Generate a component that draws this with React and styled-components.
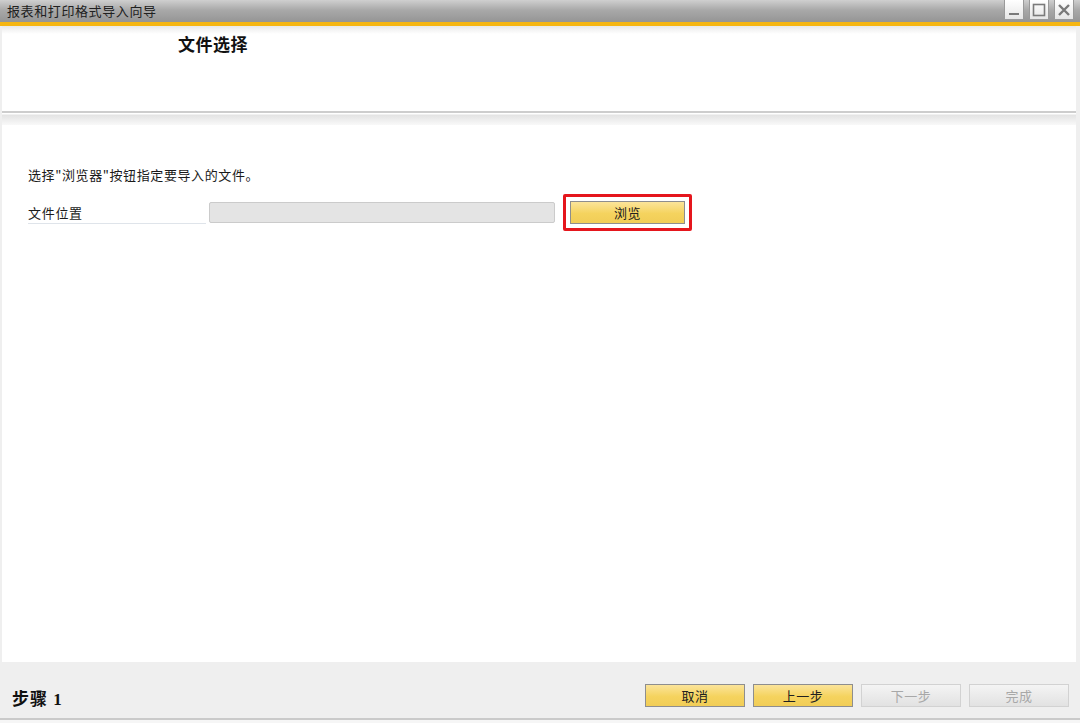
import React from 'react';
import styled, { createGlobalStyle } from 'styled-components';

const GlobalStyle = createGlobalStyle`
    html, body {
        margin: 0;
        padding: 0;
        background: #ffffff;
    }
    body {
        font-family: "Noto Sans CJK SC", "Liberation Sans", sans-serif;
        font-size: 13px;
        color: #1a1a1a;
    }
`;

function WindowButton({ kind }) {
    return (
        <WinBtn>
            <svg width="14" height="14" viewBox="0 0 14 14">
                {kind === 'min' && <rect x="2" y="10" width="10" height="2" fill="#7a7a7a" />}
                {kind === 'max' && (
                    <rect x="1.5" y="1.5" width="11" height="11" fill="none" stroke="#7a7a7a" strokeWidth="1.6" />
                )}
                {kind === 'close' && (
                    <path d="M2 2 L12 12 M12 2 L2 12" stroke="#7a7a7a" strokeWidth="2.4" />
                )}
            </svg>
        </WinBtn>
    );
}

function App() {
    return (
        <Window>
            <GlobalStyle />
            <TitleBar>
                <TitleText>报表和打印格式导入向导</TitleText>
                <WinButtons>
                    <WindowButton kind="min" />
                    <WindowButton kind="max" />
                    <WindowButton kind="close" />
                </WinButtons>
            </TitleBar>
            <AccentLine />
            <Frame>
                <Panel>
                    <Header>
                        <StepTitle>文件选择</StepTitle>
                    </Header>
                    <Divider />
                    <Content>
                        <Hint>选择"浏览器"按钮指定要导入的文件。</Hint>
                        <FieldRow>
                            <FieldLabel>文件位置</FieldLabel>
                            <PathInput />
                            <Highlight>
                                <Button $width={115}>浏览</Button>
                            </Highlight>
                        </FieldRow>
                    </Content>
                </Panel>
                <Footer>
                    <StepLabel>步骤 1</StepLabel>
                    <ButtonRow>
                        <Button $width={100}>取消</Button>
                        <Button $width={100}>上一步</Button>
                        <Button $width={100} $disabled>下一步</Button>
                        <Button $width={100} $disabled>完成</Button>
                    </ButtonRow>
                </Footer>
            </Frame>
            <BottomEdge />
        </Window>
    );
}

const Window = styled.div`
    width: 1080px;
    height: 723px;
    display: flex;
    flex-direction: column;
    overflow: hidden;
`;

const TitleBar = styled.div`
    height: 22px;
    flex: none;
    display: flex;
    align-items: center;
    justify-content: space-between;
    background: linear-gradient(#cfcfcf, #a9a9a9 45%, #959595);
    padding-left: 7px;
`;

const TitleText = styled.span`
    font-size: 13px;
    letter-spacing: 0.6px;
    color: #202020;
    line-height: 22px;
`;

const WinButtons = styled.div`
    display: flex;
    align-self: flex-start;
    gap: 5px;
    padding-right: 6px;
`;

const WinBtn = styled.div`
    width: 20px;
    height: 20px;
    display: flex;
    align-items: center;
    justify-content: center;
    background: linear-gradient(#ffffff, #e6e6e6);
    border: 1px solid #9a9a9a;
    border-top: none;
    box-sizing: border-box;
`;

const AccentLine = styled.div`
    height: 4px;
    flex: none;
    background: #f6b612;
`;

const Frame = styled.div`
    flex: 1;
    display: flex;
    flex-direction: column;
    background: #efefef;
    min-height: 0;
`;

const Panel = styled.div`
    flex: 1;
    display: flex;
    flex-direction: column;
    margin: 0 4px 0 2px;
    background: #ffffff;
    min-height: 0;
`;

const Header = styled.div`
    height: 85px;
    flex: none;
    background: linear-gradient(#e9e9e9, #ffffff 8px);
    padding: 8px 0 0 176px;
    box-sizing: border-box;
`;

const StepTitle = styled.div`
    font-size: 17px;
    letter-spacing: 0.5px;
    font-weight: 700;
    color: #111111;
    line-height: 20px;
`;

const Divider = styled.div`
    height: 14px;
    flex: none;
    border-top: 2px solid #cdcdcd;
    background: linear-gradient(#ffffff 0, #ffffff 1px, #e3e3e3 2px, #fbfbfb 13px);
    box-sizing: border-box;
`;

const Content = styled.div`
    flex: 1;
    padding: 40px 0 0 26px;
    display: flex;
    flex-direction: column;
    gap: 9px;
`;

const Hint = styled.div`
    font-size: 13px;
    letter-spacing: 0.6px;
    line-height: 20px;
`;

const FieldRow = styled.div`
    display: flex;
    align-items: center;
`;

const FieldLabel = styled.div`
    width: 178px;
    margin-right: 3px;
    font-size: 13px;
    letter-spacing: 0.7px;
    line-height: 20px;
    border-bottom: 1px solid #dfe4ea;
    padding-top: 1px;
`;

const PathInput = styled.div`
    width: 346px;
    height: 21px;
    box-sizing: border-box;
    background: #e4e4e4;
    border: 1px solid #cbcbcb;
    border-radius: 2px;
`;

const Highlight = styled.div`
    margin-left: 8px;
    padding: 4px;
    border: 3px solid #e5161d;
    border-radius: 2px;
    display: flex;
`;

const Button = styled.div`
    width: ${(p) => p.$width}px;
    height: 23px;
    box-sizing: border-box;
    display: flex;
    align-items: center;
    justify-content: center;
    font-size: 13px;
    letter-spacing: 0.5px;
    color: ${(p) => (p.$disabled ? '#a8a8a8' : '#202020')};
    background: ${(p) =>
        p.$disabled
            ? 'linear-gradient(#f4f4f4, #e2e2e2)'
            : 'linear-gradient(#fbe49a, #f5d35e 55%, #f1cd57)'};
    border: 1px solid ${(p) => (p.$disabled ? '#d2d2d2' : '#8e8e8e')};
`;

const Footer = styled.div`
    height: 56px;
    flex: none;
    display: flex;
    align-items: center;
    justify-content: space-between;
    padding: 10px 11px 0 12px;
    box-sizing: border-box;
`;

const StepLabel = styled.div`
    font-family: "Liberation Serif", "Noto Sans CJK SC", serif;
    font-size: 17px;
    letter-spacing: 1px;
    font-weight: 700;
    color: #111111;
    margin-top: 4px;
`;

const ButtonRow = styled.div`
    display: flex;
    gap: 8px;
`;

const BottomEdge = styled.div`
    height: 5px;
    flex: none;
    border-top: 2px solid #cacaca;
    background: #f6f6f6;
    box-sizing: border-box;
`;

export default App;
